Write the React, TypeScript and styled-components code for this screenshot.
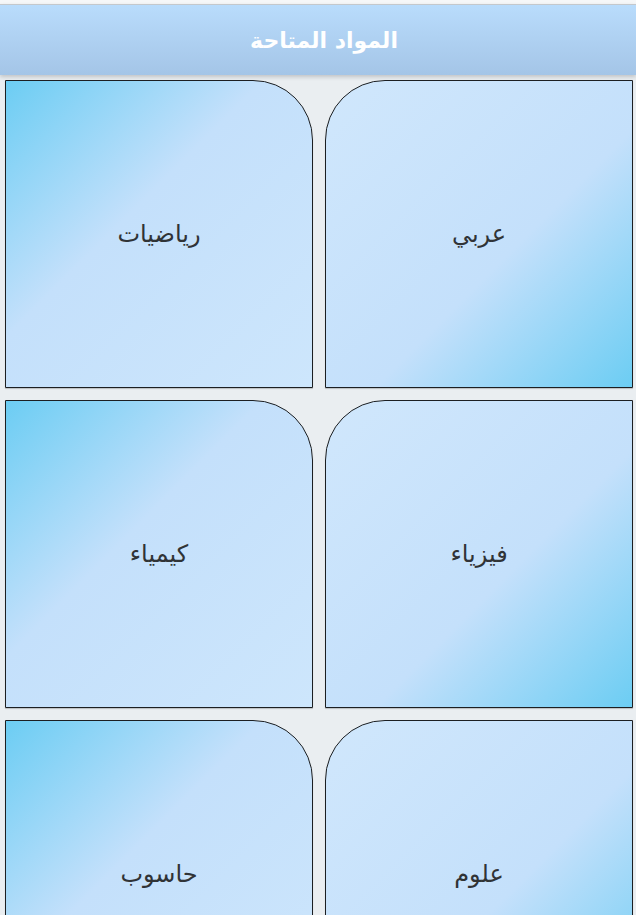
import styled, { createGlobalStyle } from "styled-components";

const GlobalStyle = createGlobalStyle`
    html, body {
        margin: 0;
        padding: 0;
        background: #eaeef1;
        font-family: "DejaVu Sans", "Noto Sans", sans-serif;
    }
`;

const Page = styled.div`
    direction: rtl;
    min-height: 915px;
    border-top: 4px solid #f6f7f8;
`;

const Header = styled.header`
    height: 70px;
    border-top: 1px solid #c4c8cc;
    background: linear-gradient(to bottom, #b9dcfc, #a4c5e7);
    box-shadow: 0 2px 4px rgba(0, 0, 0, 0.18);
    display: flex;
    align-items: center;
    justify-content: center;
    padding-left: 12px;
`;

const Title = styled.h1`
    margin: 0;
    color: #ffffff;
    font-size: 22px;
    font-weight: bold;
`;

const Grid = styled.div`
    display: grid;
    grid-template-columns: 1fr 1fr;
    gap: 12px 12px;
    padding: 5px 3px 0 5px;
`;

const Card = styled.button<{ $side: "right" | "left" }>`
    height: 308px;
    border: 1px solid #1c1f22;
    box-shadow: 0 1px 1px rgba(0, 0, 0, 0.2);
    display: flex;
    align-items: center;
    justify-content: center;
    font-family: "DejaVu Sans", "Noto Sans", sans-serif;
    font-size: 24px;
    color: #303336;
    padding: 0;
    cursor: pointer;
    border-radius: ${p => (p.$side === "right" ? "60px 0 0 0" : "0 60px 0 0")};
    background: ${p =>
        p.$side === "right"
            ? "linear-gradient(135deg, #d0e7fc 0%, #c4e0fb 58%, #6ccdf3 100%)"
            : "linear-gradient(135deg, #6ccdf3 0%, #c4e0fb 42%, #cde6fc 100%)"};
`;

const subjects = ["عربي", "رياضيات", "فيزياء", "كيمياء", "علوم", "حاسوب"];

export default function App() {
    return (
        <Page>
            <GlobalStyle />
            <Header>
                <Title>المواد المتاحة</Title>
            </Header>
            <Grid>
                {subjects.map((name, i) => (
                    <Card key={name} $side={i % 2 === 0 ? "right" : "left"}>
                        {name}
                    </Card>
                ))}
            </Grid>
        </Page>
    );
}
